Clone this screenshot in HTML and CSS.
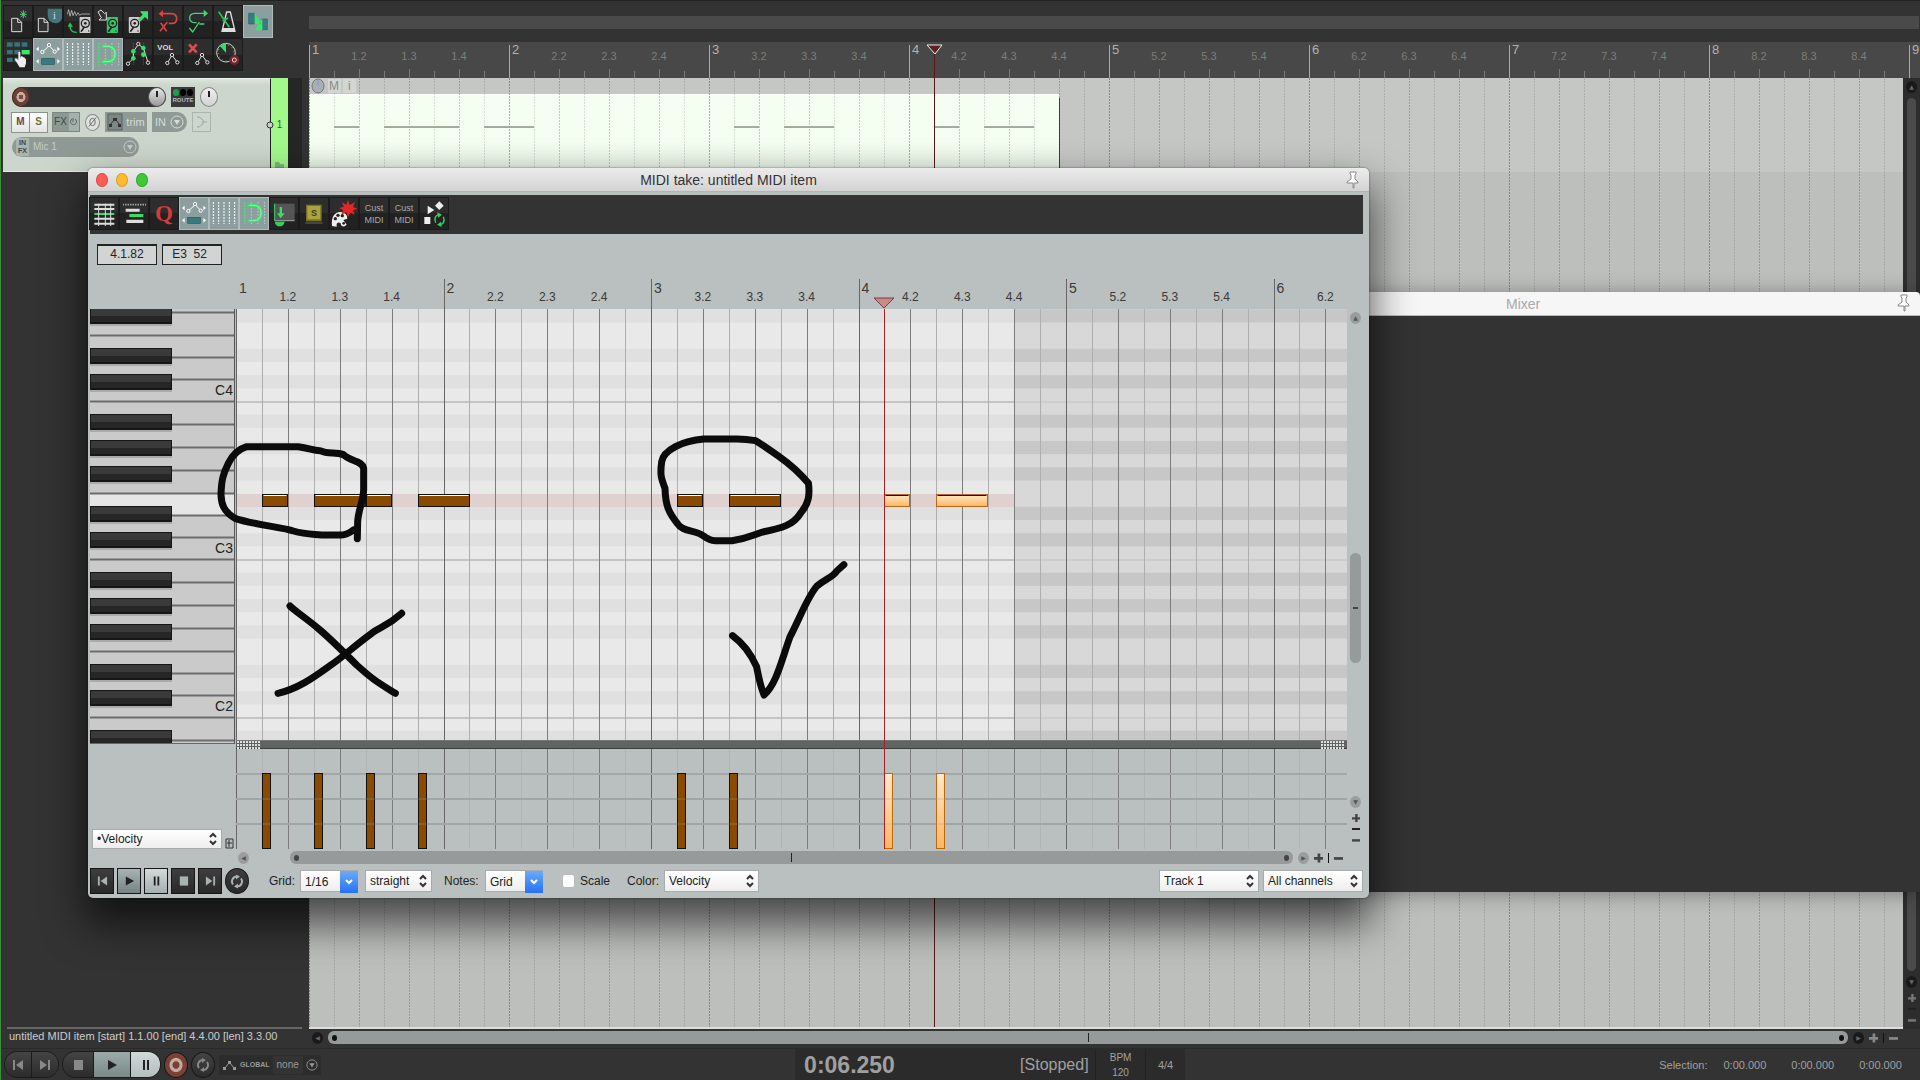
FILE: index.html
```html
<!DOCTYPE html>
<html lang="en">
<head>
<meta charset="utf-8">
<title>MIDI take: untitled MIDI item</title>
<link rel="stylesheet" href="styles.css">
</head>
<body>
<svg class="defs" aria-hidden="true">
  <symbol id="i-disk" viewBox="0 0 34 48"><rect width="34" height="48" rx="3" fill="currentColor"/><circle cx="18" cy="19" r="12" fill="none" stroke="#222" stroke-width="4"/><circle cx="18" cy="19" r="4" fill="#222"/><path d="M5 44L15 30" stroke="#222" stroke-width="5"/><circle cx="28" cy="42" r="2" fill="#222"/></symbol>
  <symbol id="i-env" viewBox="0 0 84 93"><g fill="none" stroke="#fff" stroke-width="3"><path d="M26 38L46 20L62 38"/><g fill="#8d9e9f"><circle cx="25" cy="39" r="5"/><circle cx="45" cy="18" r="5"/><circle cx="62" cy="38" r="5"/></g></g><path d="M14 23v14l-8-7zM70 23v14l8-7zM14 60v14l-8-7zM70 60v14l8-7z" fill="#fff"/><rect x="23" y="58" width="38" height="18" fill="#387b7f" stroke="#28595c" stroke-width="2"/></symbol>
  <symbol id="i-grid" viewBox="0 0 84 93"><path d="M10 12V78M26 12V78M42 12V78M58 12V78M74 12V78" stroke="#fff" stroke-width="3" stroke-dasharray="6 3"/></symbol>
  <symbol id="i-snap" viewBox="0 0 84 93"><path d="M14 12V78M34 12V78M54 12V78M74 12V78" stroke="#d5dddd" stroke-width="2" stroke-dasharray="5 4"/><path d="M14 12V78" stroke="#39e56c" stroke-width="3" stroke-dasharray="6 3"/><path d="M23 22h17q23 0 23 23t-23 23h-17" fill="none" stroke="#39e56c" stroke-width="9"/><path d="M28 22h12q23 0 23 23t-23 23h-12" fill="none" stroke="#b3ffc5" stroke-width="2"/></symbol>
  <symbol id="i-envsmall" viewBox="0 0 84 93"><path d="M40 72L54 49L70 70" fill="none" stroke="#ddd" stroke-width="3"/><g fill="#222" stroke="#ddd" stroke-width="3"><circle cx="40" cy="72" r="5"/><circle cx="54" cy="48" r="5"/><circle cx="70" cy="70" r="5"/></g></symbol>
  <symbol id="i-prev" viewBox="0 0 12 12"><path d="M1 1h2v10H1zM11 1v10L4 6z" fill="currentColor"/></symbol>
  <symbol id="i-next" viewBox="0 0 12 12"><path d="M9 1h2v10H9zM1 1v10l7-5z" fill="currentColor"/></symbol>
  <symbol id="i-play" viewBox="0 0 12 12"><path d="M2 1v10l9-5z" fill="currentColor"/></symbol>
  <symbol id="i-pause" viewBox="0 0 12 12"><path d="M3 1h2v10H3zM7 1h2v10H7z" fill="currentColor"/></symbol>
  <symbol id="i-stop" viewBox="0 0 12 12"><path d="M2 1h9v10H2z" fill="currentColor"/></symbol>
  <symbol id="i-loop" viewBox="0 0 14 14"><path d="M3 10A5 5 0 0 1 7 2M11 4A5 5 0 0 1 7 12" fill="none" stroke="currentColor" stroke-width="2"/><path d="M6 0l4 2-4 3zM8 14l-4-2 4-3z" fill="currentColor"/></symbol>
  <symbol id="i-updown" viewBox="0 0 8 14"><path d="M1 5l3-3 3 3M1 9l3 3 3-3" fill="none" stroke="#333" stroke-width="2"/></symbol>
  <symbol id="i-down" viewBox="0 0 8 6"><path d="M1 1l3 3 3-3" fill="none" stroke="#fff" stroke-width="2"/></symbol>
  <symbol id="i-drop" viewBox="0 0 14 14"><circle cx="7" cy="7" r="6" fill="none" stroke="currentColor"/><path d="M4 5h6l-3 5z" fill="currentColor"/></symbol>
  <symbol id="i-pin" viewBox="0 0 16 18"><path d="M5 1h6v2l-1 1v4l3 3v1H9v5H8v-5H2v-1l4-3V4L5 3z" fill="#fff" stroke="#888"/></symbol>
  <symbol id="i-plus" viewBox="0 0 10 10"><path d="M4 0h3v4h3v3H7v3H4V7H0V4h4z" fill="currentColor"/></symbol>
  <symbol id="i-minus" viewBox="0 0 10 10"><path d="M0 4h10v3H0z" fill="currentColor"/></symbol>
</svg>

<div class="app">
  <div class="toolbars">
    <div class="toolrow">
      <button class="tool" aria-label="New project"><svg viewBox="0 0 84 93"><path d="M23 37h18l12 12v28h-30zM41 37v12h12" fill="#333" stroke="#ddd" stroke-width="3"/><path d="M58 13v24M48 25h20M50 16l16 18M66 16l-16 18" stroke="#3fd873" stroke-width="3"/></svg></button>
      <button class="tool" aria-label="Project information"><svg viewBox="0 0 84 93"><path d="M41 8h43v27q-4 17-20 17-23-3-23-25z" fill="#46747b"/><path d="M13 37h17l12 12v28h-29zM30 37v12h12" fill="#333" stroke="#ddd" stroke-width="3"/><text x="57" y="38" class="ic-serif">i</text></svg></button>
      <button class="tool" aria-label="Open media"><svg viewBox="0 0 84 93"><path d="M10 25l4-14 4 20 5-18 4 16 5-12 5 12 5-9 5 8 5-4h26" fill="none" stroke="#ddd" stroke-width="2"/><use href="#i-disk" x="46" y="33" width="34" height="48" color="#ccc"/><path d="M38 79q-20 1-20-20" fill="none" stroke="#2bc55c" stroke-width="4"/><path d="M11 62l7-13 9 13z" fill="#2bc55c"/></svg></button>
      <button class="tool" aria-label="Import"><svg viewBox="0 0 84 93"><use href="#i-disk" x="37" y="33" width="36" height="48" color="#37c468"/><path d="M12 18l9-6 11 11 5-4v23H15l7-7z" fill="#333" stroke="#ddd" stroke-width="3"/></svg></button>
      <button class="tool" aria-label="Export"><svg viewBox="0 0 84 93"><use href="#i-disk" x="13" y="33" width="36" height="48" color="#ccc"/><path d="M42 40l14-14-8-10h24v25l-9-8-15 14z" fill="#38e66c"/></svg></button>
      <button class="tool" aria-label="Undo"><svg viewBox="0 0 84 93"><path d="M25 23h28q15 1 15 15t-15 14h-9M18 76L40 48M20 50L38 76" fill="none" stroke="#dc4444" stroke-width="5"/><path d="M14 23l13-11v22z" fill="#dc4444"/></svg></button>
      <button class="tool" aria-label="Redo"><svg viewBox="0 0 84 93"><path d="M60 22H32q-15 1-15 14t14 14h7M16 66l10 12 20-30M46 54h15" fill="none" stroke="#43d877" stroke-width="4"/><path d="M72 22l-13-11v22z" fill="#43d877"/></svg></button>
      <button class="tool" aria-label="Metronome"><svg viewBox="0 0 84 93"><path d="M38 18h11l14 58H24z" fill="none" stroke="#ddd" stroke-width="4"/><path d="M26 66h36v10H25z" fill="#ddd"/><path d="M14 17L46 64M26 45l16-9" stroke="#27c45a" stroke-width="5"/></svg></button>
      <button class="tool on" aria-label="Toggle crossfade"><svg viewBox="0 0 84 93"><path d="M14 22h18v32H14zM52 39h18v32H52z" fill="#387b82" stroke="#2c6268" stroke-width="2"/><path d="M32 19v36h20zM55 37v36H33z" fill="#3ae76d"/></svg></button>
    </div>
    <div class="toolrow">
      <button class="tool" aria-label="Item grouping"><svg viewBox="0 0 84 93"><path d="M9 10h17v13H9zM31 10h17v13H31zM53 10h17v13H53zM9 33h17v13H9zM31 33h17v13H31zM9 56h17v13H9zM31 56h17v13H31z" fill="#387176"/><path d="M53 33h24v13H53z" fill="#3ae76d"/><path d="M43 40q3-3 6 0v18l2-6h4l2 3h4l2 4h3v14l-4 12H47L33 62q0-5 5-3l5 5z" fill="#eee"/></svg></button>
      <button class="tool on" aria-label="Envelope move"><svg><use href="#i-env"/></svg></button>
      <button class="tool on" aria-label="Grid lines"><svg><use href="#i-grid"/></svg></button>
      <button class="tool on" aria-label="Snap"><svg><use href="#i-snap"/></svg></button>
      <button class="tool" aria-label="Envelope points"><svg viewBox="0 0 84 93"><path d="M28 12V78M58 12V78" stroke="#2d8d4c" stroke-width="2" stroke-dasharray="5 3"/><path d="M12 74L28 58V38L43 16L58 27L72 70" fill="none" stroke="#ddd" stroke-width="3"/><circle cx="12" cy="74" r="5" fill="#222" stroke="#ddd" stroke-width="3"/><circle cx="72" cy="71" r="5" fill="#222" stroke="#ddd" stroke-width="3"/><circle cx="43" cy="15" r="5" fill="#222" stroke="#ddd" stroke-width="3"/><g fill="#38dd69"><circle cx="28" cy="58" r="7"/><circle cx="28" cy="37" r="7"/><circle cx="58" cy="27" r="7"/><circle cx="58" cy="47" r="7"/></g></svg></button>
      <button class="tool" aria-label="Volume envelope"><svg viewBox="0 0 84 93"><use href="#i-envsmall"/><text x="10" y="33" class="ic-vol">VOL</text></svg></button>
      <button class="tool" aria-label="Remove envelope"><svg viewBox="0 0 84 93"><use href="#i-envsmall"/><path d="M15 16L38 40M38 16L15 40" stroke="#e04a4a" stroke-width="8"/></svg></button>
      <button class="tool" aria-label="Record timer"><svg viewBox="0 0 84 93"><circle cx="36" cy="41" r="28" fill="none" stroke="#ccc" stroke-width="3"/><circle cx="36" cy="41" r="24" fill="none" stroke="#999" stroke-width="4" stroke-dasharray="2 10"/><path d="M36 41L17 20Q26 13 36 13z" fill="#38dd69"/><circle cx="61" cy="63" r="15" fill="#7b2229"/><circle cx="61" cy="63" r="6" fill="none" stroke="#ddd" stroke-width="3"/></svg></button>
    </div>
  </div>

  <div class="timeline-head">
    <div class="marker-strip"></div>
    <svg class="ruler" id="main-ruler"></svg>
  </div>

  <div class="tracks">
    <div class="track">
      <div class="track-body">
        <div class="trow">
          <div class="vol"><button class="rec" aria-label="Record arm"></button><span class="knob"></span></div>
          <button class="route"><span class="dots"><i class="lit"></i><i></i><i></i></span>ROUTE</button>
          <span class="knob light"></span>
        </div>
        <div class="trow">
          <div class="ms"><button>M</button><button class="solo">S</button></div>
          <button class="fx">FX<svg width="9" height="10" viewBox="0 0 9 10"><path d="M3 2a3 3 0 1 0 3 0M4 1v4" fill="none" stroke="#59625f"/></svg></button>
          <button class="phase" aria-label="Phase"><svg width="11" height="14" viewBox="0 0 12 14"><ellipse cx="6" cy="7" rx="3" ry="4" fill="none" stroke="#666"/><path d="M2 12L10 2" stroke="#666"/></svg></button>
          <button class="trim"><svg width="16" height="18" viewBox="0 0 16 18"><rect x="1" y="1" width="14" height="16" fill="#7b8885" stroke="#59625f"/><path d="M3 12l4-5h2l4 5" fill="none" stroke="#333"/><path d="M2 11h3v3H2zM6 5h4v3H6zM11 11h3v3h-3z" fill="#333"/></svg>trim</button>
          <button class="inp">IN <svg width="14" height="16"><use href="#i-drop"/></svg></button>
          <button class="auto" aria-label="Input monitor"><svg width="12" height="14" viewBox="0 0 12 14"><path d="M1 2h2l4 3v4l-4 3H1M7 7h4" fill="none" stroke="#9aa7a1"/></svg></button>
        </div>
        <button class="infx"><span class="infx-tag">IN<br>FX</span><span class="infx-name">Mic 1</span><svg width="14" height="16"><use href="#i-drop"/></svg></button>
      </div>
      <div class="track-tab"><svg class="handle" width="8" height="9" viewBox="0 0 8 9"><ellipse cx="4" cy="4" rx="3" ry="3" fill="#ccc" stroke="#333" stroke-width="1"/></svg><span>1</span><svg class="folder" width="9" height="6" viewBox="0 0 9 6"><path d="M0 0h4l1 2h4v4H0z" fill="#7fb878"/></svg></div>
      <div class="track-gap"></div>
    </div>
  </div>

  <div class="arrange">
    <svg class="lanes" id="lanes"></svg>
    <div class="vbar dark"><span class="bead">▲</span><div class="thumb"></div><span class="bead">▼</span><svg width="8" height="10"><use href="#i-plus"/></svg><i></i><svg width="8" height="10"><use href="#i-minus"/></svg></div>
  </div>

  <div class="status">untitled MIDI item [start] 1.1.00 [end] 4.4.00 [len] 3.3.00</div>
  <div class="hbar dark"><span class="bead">◀</span><div class="thumb"><b></b><i></i><b></b></div><span class="bead">▶</span><svg width="9" height="10"><use href="#i-plus"/></svg><em></em><svg width="9" height="10"><use href="#i-minus"/></svg></div>

  <div class="transport">
    <div class="tgroup">
      <div class="pill"><button aria-label="Start"><svg><use href="#i-prev"/></svg></button><button aria-label="End"><svg><use href="#i-next"/></svg></button></div>
      <div class="pill wide"><button aria-label="Stop"><svg><use href="#i-stop"/></svg></button><button class="play" aria-label="Play"><svg><use href="#i-play"/></svg></button><button class="pause" aria-label="Pause"><svg><use href="#i-pause"/></svg></button></div>
      <button class="round record" aria-label="Record"></button>
      <button class="round" aria-label="Repeat"><svg><use href="#i-loop"/></svg></button>
      <button class="global"><svg width="14" height="12" viewBox="0 0 14 12"><path d="M2 9l4-5h1l4 5" fill="none" stroke="#999"/><path d="M0 8h3v3H0zM5 2h3v3H5zM10 8h3v3h-3z" fill="#999"/></svg><b>GLOBAL</b><span>none</span><svg width="12" height="14"><use href="#i-drop"/></svg></button>
    </div>
    <div class="clock"><span class="time">0:06.250</span><span class="state">[Stopped]</span><span class="bpm">BPM<br>120</span><span class="sig">4/4</span></div>
    <div class="selection"><span>Selection:</span><span>0:00.000</span><span>0:00.000</span><span>0:00.000</span></div>
  </div>
</div>

<section class="mixer"><header>Mixer<svg class="pin"><use href="#i-pin"/></svg></header></section>

<section class="midi">
  <header class="titlebar"><span class="lights"><i class="close"></i><i class="min"></i><i class="max"></i></span><h1>MIDI take: untitled MIDI item</h1><svg class="pin"><use href="#i-pin"/></svg></header>
  <div class="midi-tools">
    <button class="tool" aria-label="Piano roll view"><svg viewBox="0 0 84 93"><path d="M13 20H73M13 33H73M13 62H73M13 77H73" stroke="#ddd" stroke-width="6"/><path d="M13 48H73" stroke="#38dd69" stroke-width="6"/><path d="M26 17V84M46 17V84M62 17V84" stroke="#ddd" stroke-width="3"/></svg></button>
    <button class="tool" aria-label="Named notes"><svg viewBox="0 0 84 93"><path d="M10 20H80" stroke="#ddd" stroke-width="5" stroke-dasharray="2 3"/><path d="M17 32h42v9H17zM19 65h51v10H19z" fill="#ddd"/><path d="M28 48h42v9H28z" fill="#38dd69"/></svg></button>
    <button class="tool quant">Q</button>
    <button class="tool on" aria-label="Events"><svg><use href="#i-env"/></svg></button>
    <button class="tool on" aria-label="Grid"><svg><use href="#i-grid"/></svg></button>
    <button class="tool on" aria-label="Snap"><svg><use href="#i-snap"/></svg></button>
    <button class="tool" aria-label="Dock"><svg viewBox="0 0 84 93"><path d="M14 17h60v50H14z" fill="#555"/><path d="M14 17V68" stroke="#38dd69" stroke-width="3"/><path d="M14 68H74" stroke="#aaa" stroke-width="3"/><path d="M14 71h30q-3 14-15 14T14 71z" fill="#38cd63"/><path d="M29 27h7v19h8L32 61 21 46h8z" fill="#38dd69"/></svg></button>
    <button class="tool" aria-label="Step input"><svg viewBox="0 0 84 93"><path d="M18 20h47v50H18z" fill="#777024"/><path d="M22 24h39v40H22z" fill="#aaa341"/><path d="M16 75h52" stroke="#666" stroke-width="3"/><text x="33" y="54" class="ic-s">S</text></svg></button>
    <button class="tool" aria-label="Colour notes"><svg viewBox="0 0 84 93"><path d="M6 84q-4-40 26-42 20 2 20 20l-12 4 10 14-6 5q-12 2-12-9-9-6-12 2v8z" fill="#eee"/><g fill="#222"><circle cx="16" cy="62" r="5"/><circle cx="24" cy="52" r="5"/><circle cx="37" cy="53" r="5"/><circle cx="41" cy="76" r="4"/></g><path d="M54 6l5 15 16-8-6 14 13 5-13 5 5 13-13-6-7 14-5-15-16 8 7-14-13-7 15-4-7-13 14 7z" fill="#e52626"/></svg></button>
    <button class="tool cust">Cust<br>MIDI</button>
    <button class="tool cust">Cust<br>MIDI</button>
    <button class="tool" aria-label="Media actions"><svg viewBox="0 0 84 93"><path d="M23 23v26l20-13zM58 10l13 13-13 13-13-13zM13 57h18v21H13z" fill="#eee"/><path d="M47 74q-7-18 8-24M70 56q7 18-8 24" fill="none" stroke="#38cd63" stroke-width="4"/><path d="M52 43l14 7-12 9zM65 87l-14-7 12-9z" fill="#38cd63"/></svg></button>
  </div>
  <div class="readout"><output>4.1.82</output><output class="pitch">E3&nbsp; 52</output></div>
  <div class="editor">
    <div class="keys-col">
      <svg class="keys" id="keys"></svg>
      <div class="lane-pick"><label class="pick lane"><select aria-label="Lane"><option>•Velocity</option></select><svg><use href="#i-updown"/></svg></label><button class="addlane" aria-label="Add lane"><svg width="9" height="11" viewBox="0 0 9 11"><path d="M1 1h7v9H1zM4 2v7M2 5h5" fill="none" stroke="#333"/></svg></button></div>
    </div>
    <svg class="roll" id="roll"></svg>
    <div class="vbar"><span class="bead">▲</span><div class="track-space"><div class="thumb"></div></div><span class="bead">▼</span><svg width="8" height="10"><use href="#i-plus"/></svg><i></i><svg width="8" height="10"><use href="#i-minus"/></svg></div>
  </div>
  <div class="hbar"><span class="bead">◀</span><div class="thumb"><b></b><i></i><b></b></div><span class="bead">▶</span><svg width="9" height="10"><use href="#i-plus"/></svg><em></em><svg width="9" height="10"><use href="#i-minus"/></svg></div>
  <footer class="controls">
    <div class="mini"><button aria-label="Start"><svg><use href="#i-prev"/></svg></button><button class="play" aria-label="Play"><svg><use href="#i-play"/></svg></button><button class="pause" aria-label="Pause"><svg><use href="#i-pause"/></svg></button><button aria-label="Stop"><svg><use href="#i-stop"/></svg></button><button aria-label="End"><svg><use href="#i-next"/></svg></button><button class="loop" aria-label="Repeat"><svg><use href="#i-loop"/></svg></button></div>
    <label class="field f-grid" for="grid">Grid:</label>
    <span class="pick combo"><select id="grid"><option>1/16</option></select><span class="cap"><svg><use href="#i-down"/></svg></span></span>
    <span class="pick straight"><select aria-label="Grid type"><option>straight</option></select><svg><use href="#i-updown"/></svg></span>
    <label class="field f-notes" for="notes">Notes:</label>
    <span class="pick combo"><select id="notes"><option>Grid</option></select><span class="cap"><svg><use href="#i-down"/></svg></span></span>
    <label class="field f-scale"><input type="checkbox">Scale</label>
    <label class="field f-color" for="color">Color:</label>
    <span class="pick color"><select id="color"><option>Velocity</option></select><svg><use href="#i-updown"/></svg></span>
    <span class="pick right"><select aria-label="Track"><option>Track 1</option></select><svg><use href="#i-updown"/></svg></span>
    <span class="pick chan"><select aria-label="Channel"><option>All channels</option></select><svg><use href="#i-updown"/></svg></span>
  </footer>
  <svg class="ink ink-wrong" viewBox="0 0 1440 1080"><path d="M820 390Q800 405 785 405H725C690 402 675 403 640 393C610 382 520 374 465 355C430 335 424 310 423 285C424 240 430 220 445 190C460 160 480 146 500 140H655C690 145 700 152 720 152C745 164 765 155 790 164C815 187 845 180 851 205V270C850 300 835 330 833 365L832 416"/><path d="M630 618C640 630 680 655 720 690C755 720 790 755 830 795C880 840 890 845 946 880M594 880C660 865 710 825 750 797C790 770 820 740 875 700C900 680 920 680 965 640"/></svg>
  <svg class="ink ink-right" viewBox="0 0 1568 1020" preserveAspectRatio="none"><path d="M245 122Q225 117 205 117H135C90 122 50 150 46 185C42 225 45 235 53 265C54 320 62 340 80 372C90 395 115 390 130 404C145 418 150 422 160 422H195C230 415 240 405 260 396C300 385 325 375 340 340C358 310 360 285 357 250C345 230 325 200 295 170C275 150 260 135 245 122"/><path d="M196 707Q228 740 247 800Q255 860 263 885C290 850 300 780 318 710C340 650 355 590 375 558C395 535 410 530 417 513L432 494"/></svg>
</section>
<script src="script.js"></script>
</body>
</html>
```
FILE: styles.css
```css
* { box-sizing: border-box; }
body { margin: 0; background: #333; font: 12px/16px "Liberation Sans", Arial, sans-serif; color: #222; overflow: hidden; position: relative; }
button, select, input { font: inherit; color: inherit; margin: 0; }
button { border: 0; padding: 0; background: none; display: flex; align-items: center; justify-content: center; }
svg { display: block; }
.defs { position: absolute; width: 0; height: 0; }

.app { display: grid; grid-template-columns: 309px 1fr; grid-template-rows: 78px 1fr 19px 32px; height: 100vh; border-left: 1px solid #3f8f3c; background: #333; }
.toolbars { display: flex; flex-direction: column; gap: 2px; padding: 5px 3px; border-top: 1px solid #222; }
.toolrow { display: flex; gap: 2px; }
.tool { width: 28px; height: 31px; background: linear-gradient(#2d2d2d 50%, #222 50%); outline: 1px solid #1b1b1b; color: #aaa; }
.tool svg { width: 28px; height: 31px; }
.tool.on { background: #8d9e9f; outline-color: #b0bcbc; }
.ic-serif { font: 32px "Liberation Serif", serif; fill: #ddd; }
.ic-vol { font: bold 23px "Liberation Sans", sans-serif; fill: #ddd; }
.ic-s { font: bold 27px "Liberation Sans", sans-serif; fill: #444010; }

.timeline-head { display: flex; flex-direction: column; padding-top: 15px; gap: 13px; border-top: 1px solid #222; margin-left: -1px; }
.marker-strip { height: 13px; background: #4a4a4a; margin-right: 1px; }
.ruler { width: 100%; height: 36px; background: #484848; }
.ruler text { fill: #7d7d7d; font-size: 11px; text-anchor: middle; }
.ruler text.bar { fill: #b0b0b0; font-size: 13px; text-anchor: start; }

.tracks { padding-left: 2px; padding-right: 8px; }
.track { display: flex; height: 94px; }
.track-body { flex: 1; background: linear-gradient(#dbe5dc, #ccd6cc 6px, #ccd6cc); border-top: 1px solid #eef4ee; border-right: 1px solid #222; border-bottom: 1px solid #e6ece6; padding: 8px 8px 8px 9px; display: flex; flex-direction: column; gap: 5px; }
.track-tab { width: 17px; background: #a2f88b; display: grid; align-items: center; justify-items: center; font-size: 10px; color: #263; }
.track-tab > * { grid-area: 1 / 1; }
.handle { justify-self: start; margin-left: -5px; }
.folder { align-self: end; margin-bottom: 4px; }
.track-gap { width: 14px; background: #262626; }
.trow { display: flex; height: 20px; align-items: center; gap: 5px; }
.vol { width: 154px; height: 20px; border-radius: 10px; background: #333; display: flex; justify-content: space-between; }
.rec { width: 18px; height: 20px; border-radius: 50%; background: radial-gradient(#7b4a40 18%, #c9a9a0 20% 38%, #6a4037 42%); border: 1px solid #4a2a22; }
.knob { width: 18px; height: 20px; border-radius: 50%; border: 1px solid #555; background: linear-gradient(90deg, transparent 7px, #222 7px 9px, transparent 9px) 0 3px / 100% 6px no-repeat, linear-gradient(#e8e8e8, #999); }
.knob.light { background: linear-gradient(90deg, transparent 7px, #222 7px 9px, transparent 9px) 0 3px / 100% 6px no-repeat, linear-gradient(#f0f0f0, #d2d2d2); border-color: #888; }
.route { width: 24px; height: 20px; background: #3a3a3a; color: #bbb; flex-direction: column; font: bold 6px/9px "Liberation Sans", sans-serif; }
.dots { display: flex; gap: 1px; }
.dots i { width: 6px; height: 7px; border-radius: 50%; background: #000; }
.dots .lit { background: #1d9f4e; }
.ms { display: flex; gap: 1px; background: #8b948c; outline: 1px solid #8b948c; }
.ms button { width: 17px; height: 19px; background: linear-gradient(#fff, #e4e4e4); font-size: 10px; font-weight: bold; color: #6b4640; }
.ms .solo { color: #63763a; }
.fx { width: 28px; height: 20px; background: linear-gradient(90deg, #8b9894 16px, #a5b1ad 16px); border: 1px solid #7b8784; color: #3f4947; gap: 2px; font-size: 10px; }
.phase { width: 15px; height: 17px; border-radius: 50%; background: #dde2dd; border: 1px solid #888; }
.trim { width: 42px; height: 20px; background: #8f9a96; color: #d3dbd7; font-size: 11px; gap: 3px; }
.inp { width: 35px; height: 20px; background: #8f9a96; color: #d3dbd7; border-radius: 0 10px 10px 0; font-size: 11px; gap: 4px; }
.auto { width: 19px; height: 20px; border: 1px solid #a9b5ae; }
.infx { width: 127px; height: 20px; border-radius: 10px; background: #8f9a96; color: #c3ccc8; padding: 0 2px 0 4px; gap: 4px; }
.infx-tag { font: bold 7px/8px "Liberation Sans", sans-serif; color: #444; background: #a9b4b0; padding: 1px 2px; }
.infx-name { flex: 1; text-align: left; font-size: 10px; }

.arrange { display: flex; min-width: 0; margin-left: -1px; }
.lanes { flex: 1; min-width: 0; height: 100%; background: #bdbfbd; border-bottom: 2px solid #ddd; }
.vbar { width: 17px; display: flex; flex-direction: column; align-items: center; gap: 5px; padding: 3px 0 4px; color: #444; }
.vbar .thumb { width: 11px; flex: 1; border-radius: 6px; background: #979a9b; }
.vbar i { width: 8px; height: 2px; background: #222; }
.bead { width: 11px; height: 12px; border-radius: 50%; background: #9a9d9d; color: #555; font: 6px/12px "DejaVu Sans", sans-serif; text-align: center; flex: none; }
.dark { color: #777; background: #2d2d2d; }
.dark .bead { background: #191919; color: #666; }
.dark .thumb { background: #4b4b4b; }
.vbar.dark .thumb { width: 9px; }
.hbar svg { flex: none; }
.hbar { display: flex; align-items: center; gap: 5px; height: 13px; color: #444; }
.hbar .thumb { flex: 1; height: 13px; border-radius: 6px; background: #979a9a; display: flex; align-items: center; justify-content: space-between; padding: 0 4px; }
.hbar b { width: 5px; height: 6px; border-radius: 50%; background: #444; }
.hbar .thumb i { width: 1px; height: 9px; background: #222; }
.hbar em { width: 1px; height: 10px; background: #111; }
.hbar.dark { height: 17px; background: #333; padding: 0 22px 0 2px; }
.hbar.dark b { background: #111; }
.hbar.dark svg { color: #888; }
.status { margin: -2px 8px 0 6px; border-top: 2px solid #666; color: #ccc; font-size: 11px; line-height: 14px; padding-left: 2px; white-space: nowrap; }

.transport { grid-column: 1 / -1; display: flex; justify-content: space-between; align-items: center; padding: 0 18px 0 3px; border-top: 1px solid #2a2a2a; color: #a0a0a0; }
.tgroup { display: flex; align-items: center; gap: 3px; }
.pill { display: flex; gap: 1px; border-radius: 13px; overflow: hidden; background: #1b1b1b; border: 1px solid #1b1b1b; }
.pill button { width: 26px; height: 25px; background: linear-gradient(#444, #2c2c2c); color: #888; }
.pill.wide button { width: 30px; }
.pill.wide .play { width: 36px; background: linear-gradient(#9caaaa, #7b8989); color: #222; }
.pill.wide .pause { width: 29px; background: linear-gradient(#d0d8d8, #b4bfbf); color: #222; }
.pill svg { width: 12px; height: 12px; }
.round { width: 24px; height: 26px; border-radius: 50%; border: 1px solid #191919; background: linear-gradient(#444, #2b2b2b); color: #888; }
.round svg { width: 14px; height: 14px; }
.record { background: radial-gradient(#7a4033 3px, #c3aba4 4px 6px, #7a4033 7px); }
.global { width: 102px; height: 20px; margin-left: 1px; background: #2c2c2c; color: #999; font-size: 10px; gap: 3px; justify-content: flex-start; padding: 0 3px 0 4px; }
.global b { font-size: 7px; }
.global span { flex: 1; text-align: left; padding-left: 4px; background: #333; line-height: 18px; }
.clock { display: flex; align-items: center; width: 390px; height: 31px; background: #2b2b2b; }
.time { font-size: 23px; font-weight: bold; padding-left: 9px; flex: 1; }
.state { font-size: 16px; width: 75px; }
.bpm { width: 51px; text-align: center; font-size: 10px; line-height: 15px; border-left: 1px solid #222; border-right: 1px solid #222; }
.sig { width: 39px; text-align: center; font-size: 11px; }
.selection { display: flex; font-size: 11px; gap: 25px; }
.selection span:first-child { margin-right: -9px; }

.mixer { position: absolute; left: 1200px; right: 0; top: 292px; height: 600px; background: #333; border-radius: 4px 4px 0 0; box-shadow: 0 2px 20px rgba(0,0,0,.35); }
.mixer header { height: 24px; background: #f6f6f6; border-radius: 4px 4px 0 0; border-bottom: 1px solid #bbb; color: #aaa; font-size: 14px; line-height: 25px; padding-left: 306px; display: flex; justify-content: space-between; }
.pin { width: 16px; height: 18px; margin: 2px 8px 0; }

.midi { position: absolute; left: 88px; top: 168px; width: 1281px; height: 730px; background: #b9c0bf; border-radius: 5px; box-shadow: 0 0 2px rgba(0,0,0,.6), 0 22px 40px 4px rgba(0,0,0,.62); display: flex; flex-direction: column; }
.titlebar { height: 24px; background: linear-gradient(#ececec, #d3d3d3); border-bottom: 1px solid #b4b4b4; border-radius: 5px 5px 0 0; display: grid; grid-template-columns: 1fr auto 1fr; align-items: center; }
.titlebar .pin { justify-self: end; margin-top: 0; margin-right: 8px; }
.titlebar h1 { margin: 1px 0 0; font-size: 14px; font-weight: normal; color: #333; }
.lights { display: flex; gap: 8px; padding-left: 8px; }
.lights i { width: 12px; height: 14px; border-radius: 50%; background: #fb5c56; border: 1px solid #df4843; }
.lights .min { background: #fcbc2e; border-color: #dd9f24; }
.lights .max { background: #3fc937; border-color: #2ca725; }
.midi-tools { margin: 3px 6px 0 2px; height: 39px; background: #333; display: flex; gap: 2px; padding: 3px 0; }
.midi-tools .quant { font: bold 23px "Liberation Serif", serif; color: #d83a3a; }
.midi-tools .cust { font-size: 9px; line-height: 12px; }
.readout { display: flex; gap: 5px; padding: 10px 0 0 9px; height: 45px; }
.readout output { width: 60px; height: 21px; border: 1px solid #222; border-top-width: 2px; background: #d2d4d3; line-height: 17px; text-align: center; font-size: 12px; }
.readout .pitch { padding-right: 5px; }
.editor { display: flex; height: 570px; padding-right: 5px; }
.keys-col { width: 148px; padding: 30px 2px 0; display: flex; flex-direction: column; justify-content: space-between; }
.keys { width: 145px; height: 435px; background: #cacaca; border-right: 1px solid #555; border-bottom: 1px solid #666; }
.keys text { font-size: 14px; fill: #222; text-anchor: end; }
.lane-pick { display: flex; gap: 3px; align-items: flex-end; padding-left: 2px; }
.roll { flex: 1; min-width: 0; height: 570px; }
.roll text { font-size: 12px; fill: #3a3a3a; text-anchor: middle; }
.roll text.bar { font-size: 14px; text-anchor: start; }
.editor .vbar { padding-top: 33px; padding-bottom: 4px; }
.track-space { flex: 1; width: 11px; display: flex; flex-direction: column; padding-top: 224px; }
.editor .vbar .thumb { flex: none; height: 110px; background: linear-gradient(#444, #444) center / 5px 2px no-repeat #979a9b; }
.midi .hbar { margin: 2px 26px 4px 150px; }
.midi .hbar .thumb { margin-left: 36px; }

.pick { display: grid; height: 22px; background: linear-gradient(#fff, #eee); border: 1px solid #aaa; align-items: center; }
.pick > * { grid-area: 1 / 1; }
.pick select { appearance: none; border: 0; background: none; padding: 0 0 0 4px; width: 100%; height: 20px; font-size: 12px; }
.pick > svg { width: 8px; height: 14px; justify-self: end; margin-right: 4px; pointer-events: none; }
.lane { width: 130px; height: 20px; }
.lane select { height: 18px; }
.combo { width: 58px; }
.cap { justify-self: end; width: 18px; height: 22px; background: linear-gradient(#6aabfa, #2671f5); display: flex; align-items: center; justify-content: center; margin-right: -1px; pointer-events: none; }
.cap svg { width: 8px; height: 6px; }
.controls { display: flex; padding: 0 6px 0 2px; height: 26px; align-items: center; }
.mini { display: flex; gap: 3px; }
.mini button { width: 24px; height: 26px; background: linear-gradient(#3e3e3e, #292929); border: 1px solid #161616; color: #aab2b2; }
.mini svg { width: 11px; height: 12px; }
.mini .play { background: linear-gradient(#a8b3b3, #778383); color: #222; }
.mini .pause { background: linear-gradient(#d3dada, #a5b0b0); color: #222; }
.mini .loop { border-radius: 50%; }
.mini .loop svg { width: 14px; height: 15px; }
.field { font-size: 12px; white-space: nowrap; }
.f-grid { width: 51px; padding-left: 20px; }
.straight { width: 67px; margin-left: 7px; }
.f-notes { width: 53px; padding-left: 12px; }
.f-scale { display: flex; gap: 5px; width: 84px; padding-left: 19px; align-items: center; }
.f-scale input { appearance: none; width: 13px; height: 14px; background: #fff; border: 1px solid #bbb; border-radius: 3px; flex: none; }
.f-color { width: 37px; }
.color { width: 95px; }
.right { width: 100px; margin-left: auto; }
.chan { width: 100px; margin-left: 4px; }

.ink { position: absolute; pointer-events: none; fill: none; stroke: #0b0b0b; stroke-width: 7px; stroke-linecap: round; stroke-linejoin: round; }
.ink path { vector-effect: non-scaling-stroke; }
.ink-wrong { left: -8px; top: 232px; width: 480px; height: 360px; }
.ink-right { left: 552px; top: 232px; width: 740px; height: 340px; }
```
FILE: script.js
```js
// Notes of the take, in eighth-note steps: start, length, selected.
const notes = [[1, 1], [3, 2], [5, 1], [7, 2], [17, 1], [19, 2], [25, 1, true], [27, 2, true]];
const ITEM_STEPS = 30;
const CURSOR_STEP = 25;

const rect = (x, y, w, h, attrs) => `<rect x="${x}" y="${y}" width="${w}" height="${h}" ${attrs}/>`;
const vline = (x, y1, y2, attrs) => `<path d="M${Math.round(x) + 0.5} ${y1}V${y2}" ${attrs}/>`;
const hline = (y, x1, x2, attrs) => `<path d="M${x1} ${y}H${x2}" ${attrs}/>`;

// Arrange view: ruler and lanes share a step of 25 pixels.
const STEP = 25;
const rulerEl = document.getElementById('main-ruler');
const steps = Math.floor(rulerEl.clientWidth / STEP);
let ruler = '';
let lanes = rect(0, 0, '100%', 94, 'fill="#c5c7c5"') +
  '<defs><linearGradient id="item" x2="0" y2="1"><stop offset=".6" stop-color="#f4fef1"/><stop offset="1" stop-color="#e4efe2"/></linearGradient>' +
  '<linearGradient id="sel" x2="0" y2="1"><stop stop-color="#ffe9cb"/><stop offset="1" stop-color="#fdb562"/></linearGradient></defs>' +
  rect(0, 17, ITEM_STEPS * STEP, 77, 'fill="url(#item)"') +
  rect(ITEM_STEPS * STEP, 20, 1, 74, 'fill="#444"') +
  '<path d="M0 16.5H750" stroke="#fff"/>';
for (let i = 0; i <= steps; i++) {
  const x = i * STEP;
  const bar = Math.floor(i / 8) + 1;
  const beat = (i % 8) / 2 + 1;
  if (i % 8 === 0) {
    ruler += vline(x, 3, 36, 'stroke="#aaa"') + `<text class="bar" x="${x + 3}" y="12">${bar}</text>`;
  } else {
    ruler += vline(x, i % 2 ? 29 : 27, 36, 'stroke="#777"');
    if (i % 2 === 0) ruler += `<text x="${x}" y="18">${bar}.${beat}</text>`;
  }
  lanes += vline(x, 0, 2000, `stroke="#000" stroke-opacity="${i % 8 === 0 ? 0.3 : i % 2 ? 0.12 : 0.2}" stroke-dasharray="2 1"`);
}
for (const [s, n] of notes) lanes += rect(s * STEP, 48, n * STEP, 2, 'fill="#a0af9b"');
lanes += '<ellipse cx="9" cy="8" rx="6" ry="7" fill="#a7b0b3" stroke="#777"/><path d="M9 1v7" stroke="#88f"/>' +
  rect(19, 1, 13, 14, 'fill="#d4d6d4"') + rect(34, 1, 13, 14, 'fill="#d4d6d4"') +
  '<text x="20" y="12" font-size="12" fill="#888">M</text><text x="39" y="12" font-size="12" fill="#888">i</text>';
const cx = CURSOR_STEP * STEP;
lanes += vline(cx, 0, 2000, 'stroke="#5c1616"');
ruler += vline(cx, 8, 36, 'stroke="#5c1616"') + `<path d="M${cx - 7} 3h15l-7 9z" fill="#5a2222" stroke="#eee"/>`;
rulerEl.innerHTML = ruler;
document.getElementById('lanes').innerHTML = lanes;

// Piano roll: top 30 pixels are the ruler, then the notes, the divider and the velocity lane.
const MS = 207.5 / 8;
const ROW = 158 / 12;
const C4 = 122.5;
const TOP = 30, END = 461, LANE = 470, BOTTOM = 570;
const width = 1111;
const itemEnd = ITEM_STEPS * MS;
const black = [1, 3, 6, 8, 10];
let roll = rect(0, TOP, itemEnd, END - TOP, 'fill="#e9e9e9"') + rect(itemEnd, TOP, width - itemEnd, END - TOP, 'fill="#d8d8d8"');
for (let k = -8; k < 26; k++) {
  const pitch = ((-k - 1) % 12 + 12) % 12;
  const y = C4 + k * ROW;
  if (black.includes(pitch)) {
    const top = Math.max(y, TOP);
    const h = Math.min(y + ROW, END) - top;
    if (h > 0) roll += rect(0, top, itemEnd, h, 'fill="#e0e0e0"') + rect(itemEnd, top, width - itemEnd, h, 'fill="#c7c7c7"');
  }
  if (pitch === 11) roll += hline(Math.round(y), 0, itemEnd, 'stroke="#c4c4c4" stroke-width="2"') + hline(Math.round(y), itemEnd, width, 'stroke="#c2c2c2"');
}
const noteY = 215;
roll += rect(0, noteY, itemEnd, 13, 'fill="#e1d0d0"');
for (let i = 0; i * MS < width; i++) {
  const x = i * MS;
  const bar = Math.floor(i / 8) + 1;
  if (i % 2) {
    roll += vline(x, TOP, END, 'stroke="#aeaeae"') + vline(x, LANE, BOTTOM, 'stroke="#b0b4b4"');
  } else {
    const c = i % 8 ? '#7c7c7c' : '#666';
    roll += vline(x, i % 8 || i === 0 ? TOP : 0, END, `stroke="${c}"`) + vline(x, LANE, BOTTOM, `stroke="${c}"`);
    roll += i % 8 ? `<text x="${x}" y="22">${bar}.${(i % 8) / 2 + 1}</text>` : `<text class="bar" x="${x + 3}" y="14">${bar}</text>`;
  }
}
roll += rect(0, END, width, 9, 'fill="#5f6462"') + hline(END + 8.5, 0, width, 'stroke="#3c3e3d"') + hline(END + 0.5, 0, width, 'stroke="#777"');
for (const x of [1, 1085]) roll += `<path d="M${x} ${END + 2}h24m-24 3h24m-24 3h24" stroke="#e0e0e0" stroke-width="2" stroke-dasharray="2 1"/>`;
for (const y of [495, 520, 545]) roll += hline(y, 0, width, 'stroke="#a2a8a8" stroke-width="2"');
for (const [s, n, sel] of notes) {
  const x = Math.round(s * MS) + 0.5;
  const w = Math.floor(n * MS);
  const look = sel ? 'fill="url(#sel)" stroke="#b96a10"' : 'fill="#8a4b00" stroke="#111"';
  roll += rect(x, noteY + 0.5, w, 12, look) + hline(noteY + 1.5, x + 1, x + w - 1, `stroke="${sel ? '#111' : '#fff'}"`);
  roll += rect(x, 494.5, 8, 75, look);
}
for (const y of [520, 545]) roll += hline(y, 0, width, 'stroke="#9ea3a3" stroke-opacity=".4"');
const px = Math.round(CURSOR_STEP * MS);
roll += vline(px, TOP, BOTTOM, 'stroke="#a82020"') + `<path d="M${px - 10} 19h20l-10 10z" fill="#c98a8a" stroke="#7a3c3c"/>`;
document.getElementById('roll').innerHTML = roll;

// Keyboard: seams between white keys, then black keys centred on their rows.
let keys = rect(0, 184, 145, 23, 'fill="#e6e6e6"');
for (const base of [92, 250, 408, 566]) {
  [0, -22, -44, -66, -89, -112, -135].forEach((d, i) => {
    keys += hline(base + d + 0.5, i === 0 || i === 3 ? 0 : 80, 145, 'stroke="#6c6c6c" stroke-width="2"');
  });
  if (base < 500) keys += `<text x="143" y="${base - 6}">C${{ 92: 4, 250: 3, 408: 2 }[base]}</text>`;
  for (const p of black) {
    const y = Math.round(base + 1 - (p + 0.5) * ROW) - 8;
    keys += rect(0, y + 16, 82, 2, 'fill="#aaa"') + rect(0, y, 82, 16, 'fill="#161616"') + rect(1, y + 1, 80, 7, 'fill="#3a3a3a"') + rect(1, y + 8, 80, 6, 'fill="#262626"');
  }
}
document.getElementById('keys').innerHTML = keys;
```
